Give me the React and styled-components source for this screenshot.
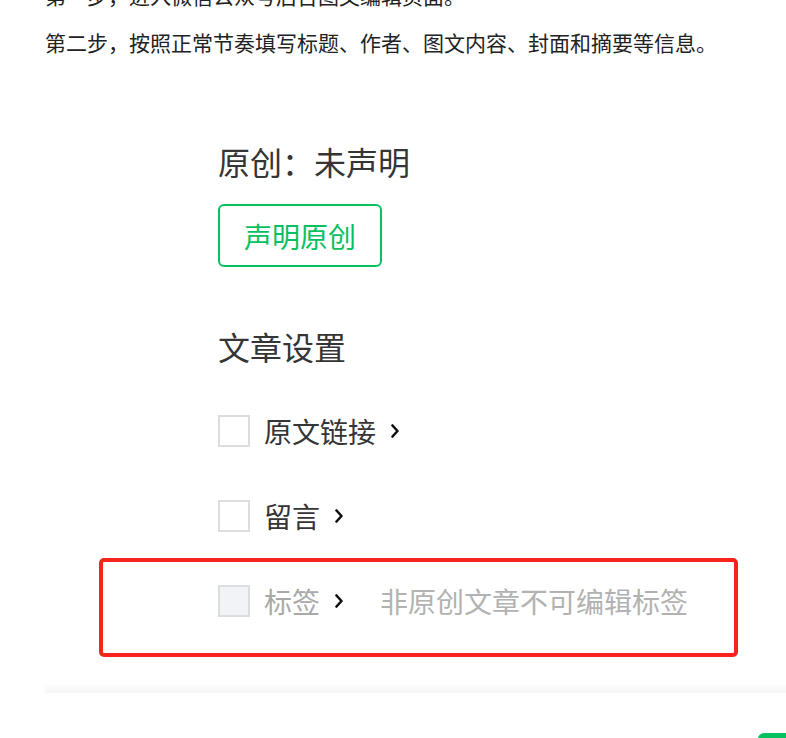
import React from "react";
import styled, { createGlobalStyle } from "styled-components";

const Global = createGlobalStyle`
  html, body { margin: 0; padding: 0; background: #ffffff; }
  body { font-family: "Noto Sans CJK SC", "Noto Sans", sans-serif; overflow: hidden; }
`;

const Page = styled.div`
  position: relative;
  width: 786px;
  height: 738px;
  overflow: hidden;
  padding-left: 45px;
  box-sizing: border-box;
`;

const Article = styled.div`
  margin-top: -21px;
`;

const Para = styled.p`
  margin: 0 0 14px;
  font-size: 21px;
  line-height: 33px;
  color: #222222;
  white-space: nowrap;
`;

const Panel = styled.div`
  margin-top: 82px;
  padding-left: 173px;
  display: flex;
  flex-direction: column;
  align-items: flex-start;
`;

const Title = styled.h2`
  margin: ${(p) => p.$top || 0}px 0 0;
  font-size: 32px;
  line-height: 40px;
  font-weight: 400;
  color: #353535;
`;

const OutlineButton = styled.button`
  margin-top: 23px;
  width: 164px;
  height: 63px;
  box-sizing: border-box;
  border: 2px solid #07c160;
  border-radius: 6px;
  background: #ffffff;
  color: #07c160;
  font-family: inherit;
  font-size: 28px;
  padding: 0;
  display: flex;
  align-items: center;
  justify-content: center;
`;

const Rows = styled.div`
  margin-top: 49px;
  display: flex;
  flex-direction: column;
  gap: 53px;
`;

const Row = styled.div`
  display: flex;
  align-items: center;
  height: 32px;
`;

const Box = styled.span`
  width: 32px;
  height: 32px;
  box-sizing: border-box;
  border: 2px solid #dcdde0;
  background: ${(p) => (p.$disabled ? "#f2f3f6" : "#ffffff")};
  flex: none;
`;

const Label = styled.span`
  margin-left: 14px;
  font-size: 28px;
  line-height: 32px;
  color: ${(p) => (p.$disabled ? "#a9a9a9" : "#353535")};
`;

const Chevron = styled.svg`
  margin-left: 14px;
  width: 10px;
  height: 14px;
  flex: none;
`;

const Note = styled.span`
  margin-left: 36px;
  font-size: 28px;
  line-height: 32px;
  color: #b2b2b2;
`;

const Divider = styled.div`
  margin-top: 66px;
  height: 10px;
  margin-right: -20px;
  background: linear-gradient(#ffffff, #f5f5f5);
`;

const Footer = styled.div`
  margin-top: 40px;
  display: flex;
  padding-left: 713px;
`;

const PrimaryButton = styled.div`
  flex: none;
  width: 120px;
  height: 40px;
  border-radius: 6px;
  background: #07c160;
`;

const Annotation = styled.div`
  position: absolute;
  left: 99px;
  top: 558px;
  width: 639px;
  height: 99px;
  box-sizing: border-box;
  border: 4px solid #f8231b;
  border-radius: 5px;
  pointer-events: none;
`;

const Arrow = () => (
  <Chevron viewBox="0 0 10 14">
    <polyline points="2.5,1.5 7.5,7 2.5,12.5" fill="none" stroke="#111" strokeWidth="2.6" strokeLinecap="round" strokeLinejoin="round" />
  </Chevron>
);

export default function App() {
  return (
    <>
      <Global />
      <Page>
        <Article>
          <Para>第一步，进入微信公众号后台图文编辑页面。</Para>
          <Para>第二步，按照正常节奏填写标题、作者、图文内容、封面和摘要等信息。</Para>
        </Article>
        <Panel>
          <Title>原创：未声明</Title>
          <OutlineButton>声明原创</OutlineButton>
          <Title $top={59}>文章设置</Title>
          <Rows>
            <Row>
              <Box />
              <Label>原文链接</Label>
              <Arrow />
            </Row>
            <Row>
              <Box />
              <Label>留言</Label>
              <Arrow />
            </Row>
            <Row>
              <Box $disabled />
              <Label $disabled>标签</Label>
              <Arrow />
              <Note>非原创文章不可编辑标签</Note>
            </Row>
          </Rows>
        </Panel>
        <Divider />
        <Footer>
          <PrimaryButton />
        </Footer>
        <Annotation />
      </Page>
    </>
  );
}
